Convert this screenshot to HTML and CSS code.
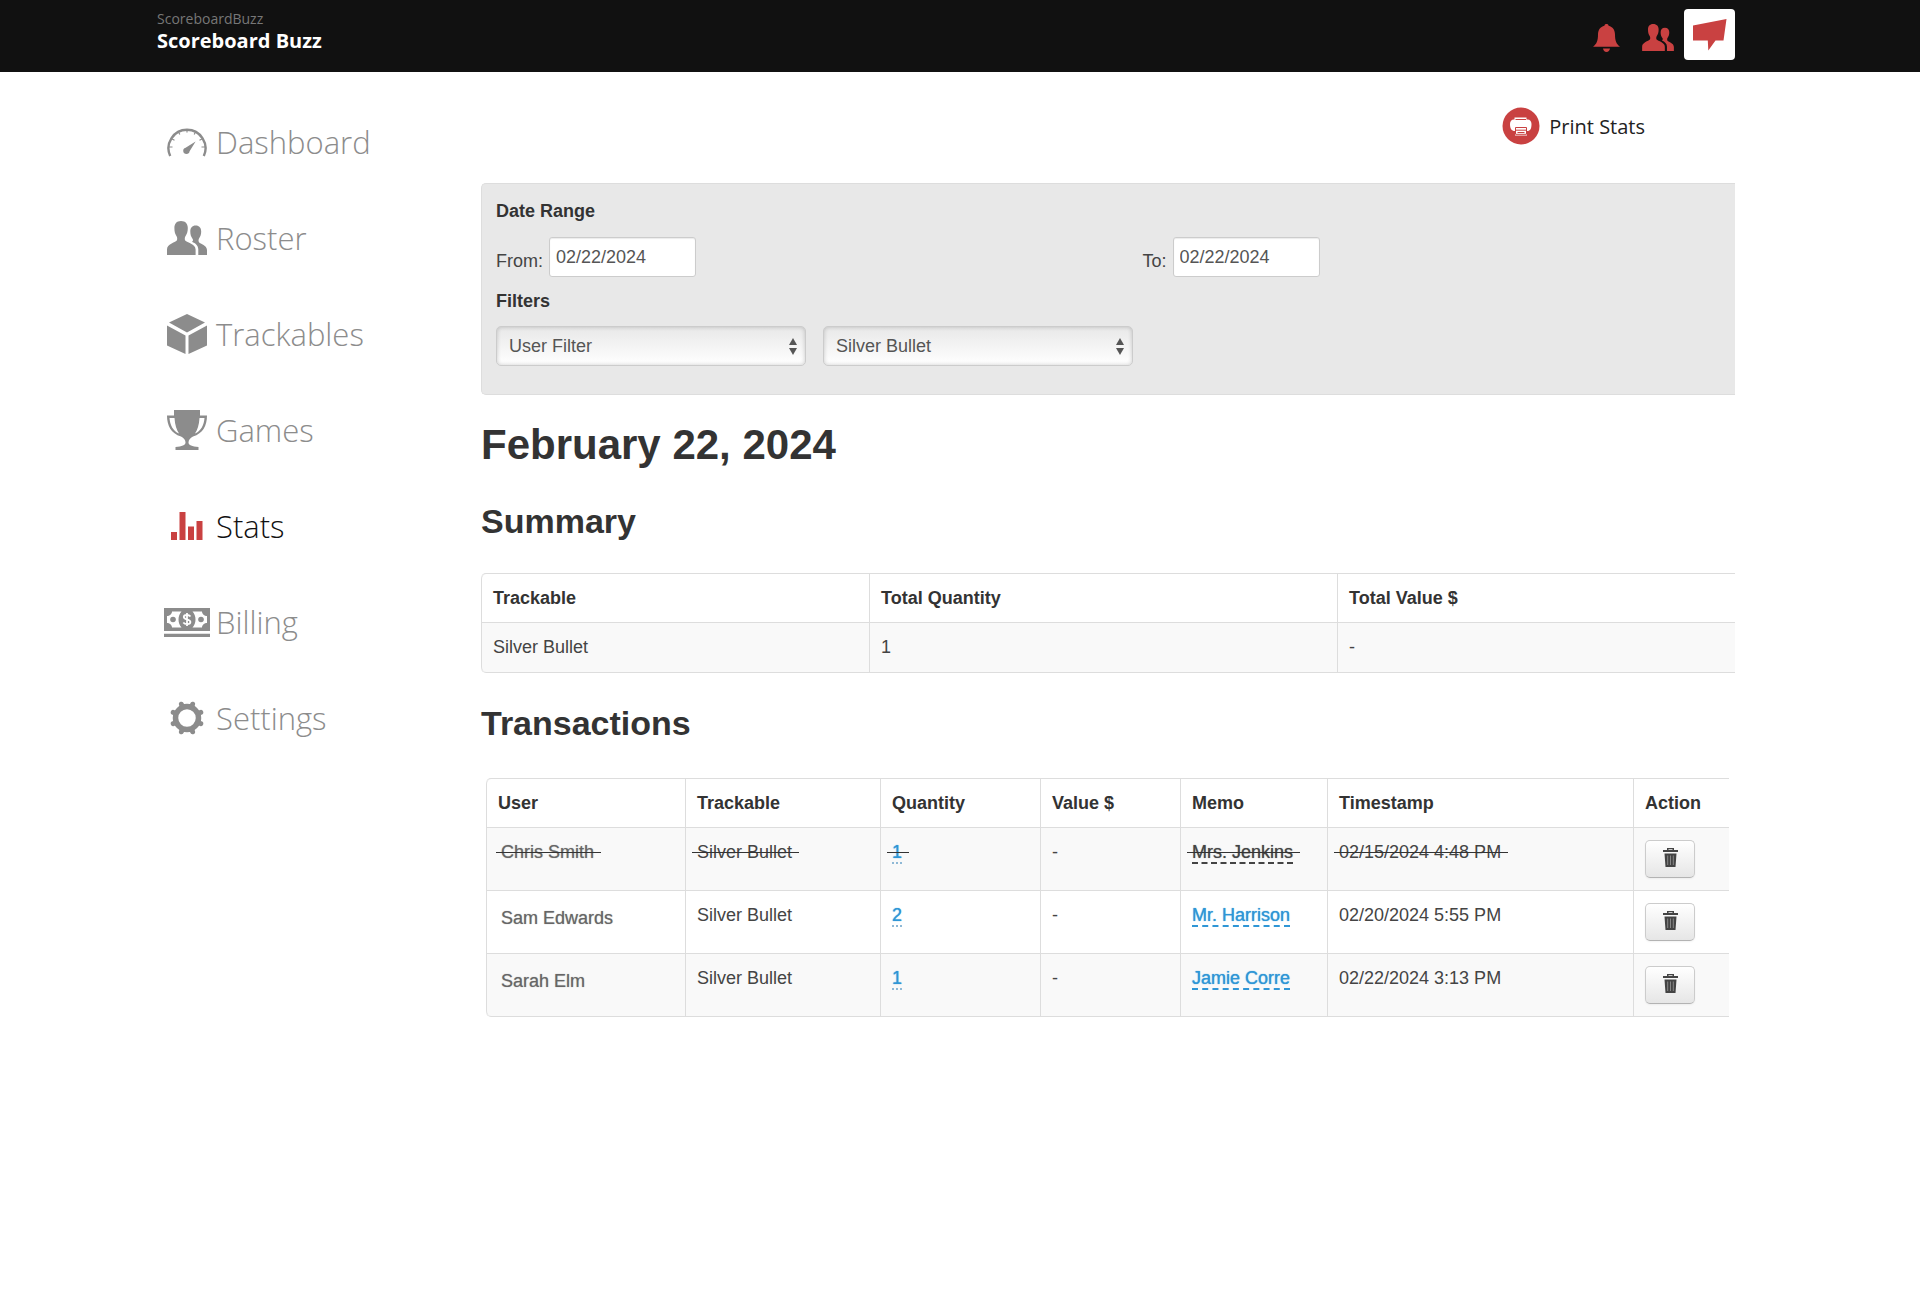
FILE: index.html
```html
<!DOCTYPE html>
<html lang="en">

<head>
    <meta charset="UTF-8">
    <meta name="viewport" content="width=device-width, initial-scale=1.0">
    <title>Scoreboard Buzz - Stats</title>
    <link rel="stylesheet" href="styles.css">
</head>

<body>
    <!-- Shared icons -->
    <svg class="sprite" aria-hidden="true">
        <symbol id="icon-users" viewBox="0 0 40 34">
            <path d="M14 0C18.500 0 20.800 2.800 20.800 7C20.800 10.500 20 13 18.300 15.500C17.600 17 17.700 18.500 18.200 19.600C20 21.700 28.600 23.200 28.600 28.500V34H0V28.500C0 23.200 8 21.700 9.800 19.600C10.300 18.500 10.400 17 9.700 15.500C8 13 7.400 10.500 7.400 7C7.400 2.800 9.500 0 14 0Z" />
            <path d="M28.700 4.600C32.300 4.600 34.200 7 34.200 10.500C34.200 13.500 33.400 15.600 31.900 17.700C31.300 19 31.500 20.300 32 21.200C33.500 23 40 24.300 40 29V34H31.300V28.500C31.300 24.500 28.500 22.300 25 20.700C26.500 19.500 26.100 18.500 25.500 17.700C24 15.600 23.300 13.500 23.300 10.500C23.300 7 25.100 4.600 28.700 4.600Z" />
        </symbol>
        <symbol id="icon-trash" viewBox="0 0 15 19">
            <path d="M4 0H11V2H15V4H0V2H4ZM5.500 1.200V2H9.500V1.200ZM1.500 5.500H13.500L12.500 19H2.500Z" />
            <path d="M4.700 7.500V17M7.500 7.500V17M10.300 7.500V17" stroke="#999" stroke-width="0.800" fill="none" />
        </symbol>
    </svg>

    <!-- Top bar -->
    <header class="topbar">
        <div class="brand">
            <span class="brand-account">ScoreboardBuzz</span>
            <a href="#" class="brand-name">Scoreboard Buzz</a>
        </div>
        <div class="topbar-links">
            <a href="#" class="topbar-link" aria-label="Notifications">
                <svg width="27" height="28" viewBox="0 0 27 28">
                    <path d="M13.500 0C14.700 0 15.500 0.700 15.600 1.700C19.700 2.700 22 6 22 10.500C22 17 23.500 20 27 22.800H0C3.500 20 5 17 5 10.500C5 6 7.300 2.700 11.400 1.700C11.500 0.700 12.300 0 13.500 0ZM10 24.500H17C16.500 26.500 15.500 28 13.500 28C11.500 28 10.500 26.500 10 24.500Z" />
                </svg>
            </a>
            <a href="#" class="topbar-link users-link" aria-label="Users">
                <svg width="32" height="27"><use href="#icon-users" /></svg>
            </a>
            <a href="#" class="logo" aria-label="Home">
                <svg width="34" height="32" viewBox="0 0 34 32">
                    <path d="M0 6.500L33.500 0L30.500 21.500H22.500L15.300 31.500L14.800 21.500H0Z" />
                </svg>
            </a>
        </div>
    </header>

    <div class="page">
        <!-- Side navigation -->
        <nav class="sidebar">
            <a href="#" class="nav-item">
                <span class="nav-icon">
                    <svg width="40" height="30" viewBox="0 0 40 30">
                        <path d="M3.200 29A18.500 18.500 0 1 1 36.800 29" fill="none" stroke="currentColor" stroke-width="2.400" />
                        <path d="M2 20H5.500M38 20H34.500M4 11.500L7.500 13.200M36 11.500L32.500 13.200M11 4L12.800 7.500M29 4L27.200 7.500M20 2V5.500" stroke="currentColor" stroke-width="1.200" />
                        <path d="M28.600 14.600L22.600 24.200A3.200 3.200 0 1 1 18.600 20.700Z" />
                    </svg>
                </span>
                Dashboard
            </a>
            <a href="#" class="nav-item">
                <span class="nav-icon">
                    <svg width="40" height="34"><use href="#icon-users" /></svg>
                </span>
                Roster
            </a>
            <a href="#" class="nav-item">
                <span class="nav-icon">
                    <svg width="40" height="40" viewBox="0 0 40 40">
                        <path d="M20 0L38 8.500L20 18.500L2 8.500ZM0 11.500L18.500 21.500V40L0 31.500ZM40 11.500L21.500 21.500V40L40 31.500Z" />
                    </svg>
                </span>
                Trackables
            </a>
            <a href="#" class="nav-item">
                <span class="nav-icon">
                    <svg width="40" height="40" viewBox="0 0 40 40">
                        <path fill-rule="evenodd" d="M7 0H33V5.500H40C40 15.500 36 23.500 26 26.500C23 28 21.500 30 21.500 32.500C21.500 35.300 25 36.500 31.500 37V40H8.500V37C15 36.500 18.500 35.300 18.500 32.500C18.500 30 17 28 14 26.500C4 23.500 0 15.500 0 5.500H7ZM2.500 8C3 15 6 21 12 23.500C9.500 20 8 15 7.500 8ZM37.500 8H32.500C32 15 30.500 20 28 23.500C34 21 37 15 37.500 8Z" />
                    </svg>
                </span>
                Games
            </a>
            <a href="#" class="nav-item active">
                <span class="nav-icon">
                    <svg width="32" height="28" viewBox="0 0 32 28">
                        <path d="M0 20H6V28H0ZM8.500 0H14.500V28H8.500ZM17 14.500H23V28H17ZM25.500 9H31.500V28H25.500Z" />
                    </svg>
                </span>
                Stats
            </a>
            <a href="#" class="nav-item">
                <span class="nav-icon">
                    <svg width="46" height="29" viewBox="0 0 46 29">
                        <path fill-rule="evenodd" d="M0 0H46V23H0ZM8 3.500C8 6 5.500 8 3 8V15C5.500 15 8 17 8 19.500H17.500C13.500 15 13.500 8 17.500 3.500ZM38 3.500H28.500C32.500 8 32.500 15 28.500 19.500H38C38 17 40.500 15 43 15V8C40.500 8 38 6 38 3.500Z" />
                        <path d="M0 25.700H46V29H0Z" />
                        <circle cx="9" cy="11.500" r="2.800" />
                        <circle cx="37" cy="11.500" r="2.800" />
                        <path d="M26.500 8.500C25 6.500 19.800 6.300 19.800 9C19.800 12 26.400 10.800 26.400 14C26.400 16.800 21 16.800 19.300 14.500M23 5V18" fill="none" stroke="#fff" stroke-width="1.800" />
                    </svg>
                </span>
                Billing
            </a>
            <a href="#" class="nav-item">
                <span class="nav-icon">
                    <svg width="34" height="34" viewBox="-17 -17 34 34">
                        <circle r="11.500" fill="none" stroke="currentColor" stroke-width="5.500" />
                        <g stroke="currentColor" stroke-width="5" stroke-linecap="round">
                            <path d="M-5.600 -13.800L-5 -12M5.600 -13.800L5 -12M-5.600 13.800L-5 12M5.600 13.800L5 12M-13.800 -5.600L-12 -5M-13.800 5.600L-12 5M13.800 -5.600L12 -5M13.800 5.600L12 5" />
                        </g>
                    </svg>
                </span>
                Settings
            </a>
        </nav>

        <main class="content">
            <div class="actions">
                <a href="#" class="print-link">
                    <svg width="38" height="38" viewBox="0 0 38 38">
                        <circle cx="19" cy="19" r="18.500" fill="#c94141" />
                        <path d="M12.500 10.500H24.500V12.500H25.500C28 12.500 29.500 14.500 29.500 17C29.500 21.500 28.500 24 25 24V28.500H13V24C9.500 24 8 21.500 8 17C8 14.500 9.500 12.500 12 12.500H12.500Z" fill="#fff" />
                        <path d="M13.500 12.500H24M13.500 20.500H24.500V27.300H13.500ZM14 23.200H24M15.500 25.500H22.500" fill="none" stroke="#c94141" />
                    </svg>
                    Print Stats
                </a>
            </div>

            <!-- Date range and filters -->
            <form class="filter-panel">
                <h4>Date Range</h4>
                <div class="date-row">
                    <div class="date-field">
                        <label for="date-from">From:</label>
                        <input type="text" id="date-from" value="02/22/2024">
                    </div>
                    <div class="date-field">
                        <label for="date-to">To:</label>
                        <input type="text" id="date-to" value="02/22/2024">
                    </div>
                </div>
                <h4>Filters</h4>
                <div class="filter-row">
                    <div class="select-wrap">
                        <select aria-label="User filter">
                            <option>User Filter</option>
                        </select>
                    </div>
                    <div class="select-wrap">
                        <select aria-label="Trackable filter">
                            <option>Silver Bullet</option>
                        </select>
                    </div>
                </div>
            </form>

            <h1>February 22, 2024</h1>

            <h2>Summary</h2>
            <table class="table">
                <thead>
                    <tr>
                        <th class="col-sum-trackable">Trackable</th>
                        <th class="col-sum-quantity">Total Quantity</th>
                        <th>Total Value $</th>
                    </tr>
                </thead>
                <tbody>
                    <tr>
                        <td>Silver Bullet</td>
                        <td>1</td>
                        <td>-</td>
                    </tr>
                </tbody>
            </table>

            <h2>Transactions</h2>
            <div class="transactions">
                <table class="table">
                    <thead>
                        <tr>
                            <th class="col-user">User</th>
                            <th class="col-trackable">Trackable</th>
                            <th class="col-quantity">Quantity</th>
                            <th class="col-value">Value $</th>
                            <th class="col-memo">Memo</th>
                            <th class="col-time">Timestamp</th>
                            <th>Action</th>
                        </tr>
                    </thead>
                    <tbody>
                        <tr class="voided">
                            <td class="user"><s>Chris Smith</s></td>
                            <td><s>Silver Bullet</s></td>
                            <td><s><a href="#" class="quantity">1</a></s></td>
                            <td>-</td>
                            <td><s><a href="#" class="memo">Mrs. Jenkins</a></s></td>
                            <td><s>02/15/2024 4:48 PM</s></td>
                            <td><button type="button" class="btn-delete" aria-label="Delete"><svg width="15" height="19"><use href="#icon-trash" /></svg></button></td>
                        </tr>
                        <tr>
                            <td class="user">Sam Edwards</td>
                            <td>Silver Bullet</td>
                            <td><a href="#" class="quantity">2</a></td>
                            <td>-</td>
                            <td><a href="#" class="memo">Mr. Harrison</a></td>
                            <td>02/20/2024 5:55 PM</td>
                            <td><button type="button" class="btn-delete" aria-label="Delete"><svg width="15" height="19"><use href="#icon-trash" /></svg></button></td>
                        </tr>
                        <tr>
                            <td class="user">Sarah Elm</td>
                            <td>Silver Bullet</td>
                            <td><a href="#" class="quantity">1</a></td>
                            <td>-</td>
                            <td><a href="#" class="memo">Jamie Corre</a></td>
                            <td>02/22/2024 3:13 PM</td>
                            <td><button type="button" class="btn-delete" aria-label="Delete"><svg width="15" height="19"><use href="#icon-trash" /></svg></button></td>
                        </tr>
                    </tbody>
                </table>
            </div>
        </main>
    </div>
</body>

</html>
```

FILE: styles.css
```css
/* General */
* {
    box-sizing: border-box;
}

body {
    margin: 0;
    background: #fff;
    color: #333;
    font-family: "Liberation Sans", Arial, sans-serif;
    font-size: 18px;
    line-height: 25px;
}

a {
    color: #2f96d6;
    text-decoration: none;
}

svg {
    display: block;
    fill: currentColor;
}

.sprite {
    position: absolute;
    width: 0;
    height: 0;
}

/* Top bar */
.topbar {
    display: flex;
    justify-content: space-between;
    align-items: flex-start;
    height: 72px;
    padding: 9px 185px 0 157px;
    background: #111;
}

.brand {
    display: flex;
    flex-direction: column;
    font-family: "Open Sans", sans-serif;
}

.brand-account {
    color: #777;
    font-size: 14px;
    line-height: 20px;
}

.brand-name {
    color: #fff;
    font-size: 20px;
    font-weight: 700;
    line-height: 24px;
}

.topbar-links {
    display: flex;
    align-items: center;
}

.topbar-link {
    padding-top: 6px;
    color: #c94141;
}

.users-link {
    margin: 0 10px 0 22px;
}

.logo {
    display: flex;
    align-items: center;
    justify-content: center;
    width: 51px;
    height: 51px;
    background: #fff;
    border-radius: 4px;
    color: #c94141;
}

/* Layout */
.page {
    display: flex;
    padding: 0 185px 60px 157px;
}

/* Side navigation */
.sidebar {
    flex: none;
    width: 324px;
    padding-top: 22px;
}

.nav-item {
    display: flex;
    align-items: center;
    height: 96px;
    color: #8c8c8c;
    font-family: "Open Sans", sans-serif;
    font-size: 31px;
    font-weight: 300;
}

.nav-item.active {
    color: #111;
}

.nav-icon {
    display: flex;
    justify-content: center;
    width: 59px;
}

.active .nav-icon {
    color: #c94141;
}

/* Content */
.content {
    flex: 1;
    min-width: 0;
    padding-top: 35px;
}

.actions {
    display: flex;
    justify-content: flex-end;
    margin-bottom: 38px;
    padding-right: 90px;
}

.print-link {
    display: flex;
    align-items: center;
    gap: 9px;
    color: #222;
    font-family: "Open Sans", sans-serif;
    font-size: 20px;
}

/* Filter panel */
.filter-panel {
    padding: 14px 14px 28px;
    background: #e8e8e8;
    border: 1px solid #ddd;
    border-right: 0;
    border-radius: 5px 0 0 5px;
}

.filter-panel h4 {
    margin: 0;
    font-size: 18px;
    line-height: 26px;
}

.date-row {
    display: grid;
    grid-template-columns: 1fr 1fr;
    column-gap: 68px;
    margin: 13px 0 11px;
}

.date-field {
    display: flex;
    align-items: center;
    gap: 6px;
}

.date-field label {
    padding-top: 8px;
    color: #444;
}

.date-field input {
    width: 147px;
    height: 40px;
    padding: 0 6px;
    background: #fff;
    border: 1px solid #ccc;
    border-radius: 3px;
    box-shadow: inset 0 1px 1px rgba(0, 0, 0, 0.08);
    color: #555;
    font: inherit;
}

.filter-row {
    display: flex;
    gap: 17px;
    margin-top: 12px;
}

.select-wrap {
    position: relative;
    width: 310px;
}

.select-wrap select {
    display: block;
    width: 100%;
    height: 40px;
    padding: 0 12px;
    appearance: none;
    background: linear-gradient(#e8e8e8, #fff);
    border: 1px solid #ccc;
    border-radius: 5px;
    box-shadow: inset 0 0 4px rgba(0, 0, 0, 0.2);
    color: #555;
    font: inherit;
}

/* Up and down arrows of the drop-downs */
.select-wrap::before,
.select-wrap::after {
    content: "";
    position: absolute;
    right: 9px;
    border: 4px solid transparent;
    pointer-events: none;
}

.select-wrap::before {
    top: 12px;
    border-top-width: 0;
    border-bottom: 7px solid #555;
}

.select-wrap::after {
    top: 22px;
    border-bottom-width: 0;
    border-top: 7px solid #555;
}

/* Headings */
h1,
h2 {
    line-height: 52px;
}

h1 {
    margin: 24px 0;
    font-size: 42px;
}

h2 {
    margin: 24px 0 26px;
    font-size: 34px;
}

/* Tables */
.table {
    width: 100%;
    table-layout: fixed;
    border: 1px solid #ddd;
    border-right: 0;
    border-left: 0;
    border-radius: 5px 0 0 5px;
    border-collapse: separate;
    border-spacing: 0;
}

.table th,
.table td {
    padding: 12px 11px;
    border-left: 1px solid #ddd;
    text-align: left;
    vertical-align: top;
}

.table th {
    padding-bottom: 11px;
}

.table td {
    border-top: 1px solid #ddd;
    color: #444;
}

.table th:first-child {
    border-top-left-radius: 5px;
}

.table tr:last-child td:first-child {
    border-bottom-left-radius: 5px;
}

.table tbody tr:nth-child(odd) td {
    background: #f9f9f9;
}

.col-sum-trackable {
    width: 388px;
}

.col-sum-quantity {
    width: 468px;
}

.transactions {
    padding: 3px 6px 3px 5px;
}

.col-user {
    width: 199px;
}

.col-trackable {
    width: 195px;
}

.col-quantity {
    width: 160px;
}

.col-value {
    width: 140px;
}

.col-memo {
    width: 147px;
}

.col-time {
    width: 306px;
}

.table .user {
    padding: 15px 14px 0;
    color: #666;
    text-shadow: 0 0 1px #999;
}

.table .voided .user {
    padding-top: 12px;
}

.quantity {
    border-bottom: 2px dotted #8fb9d6;
    text-shadow: 0 0 1px #2f96d6;
}

.memo {
    border-bottom: 2px dashed #2f96d6;
    text-shadow: 0 0 1px #2f96d6;
}

.voided .memo {
    border-bottom-color: #444;
    color: #444;
    text-shadow: 0 0 1px #777;
}

/* The line runs a little past both ends of the text */
s {
    position: relative;
    text-decoration: none;
}

s::after {
    content: "";
    position: absolute;
    top: 10px;
    left: -5px;
    right: -7px;
    border-top: 1px solid #333;
}

.btn-delete {
    display: flex;
    align-items: center;
    justify-content: center;
    width: 50px;
    height: 38px;
    padding: 0 0 4px;
    background: linear-gradient(#fff, #e6e6e6);
    border: 1px solid #ccc;
    border-bottom-color: #b3b3b3;
    border-radius: 5px;
    box-shadow: 0 1px 2px rgba(0, 0, 0, 0.05);
    color: #444;
    cursor: pointer;
}
```
